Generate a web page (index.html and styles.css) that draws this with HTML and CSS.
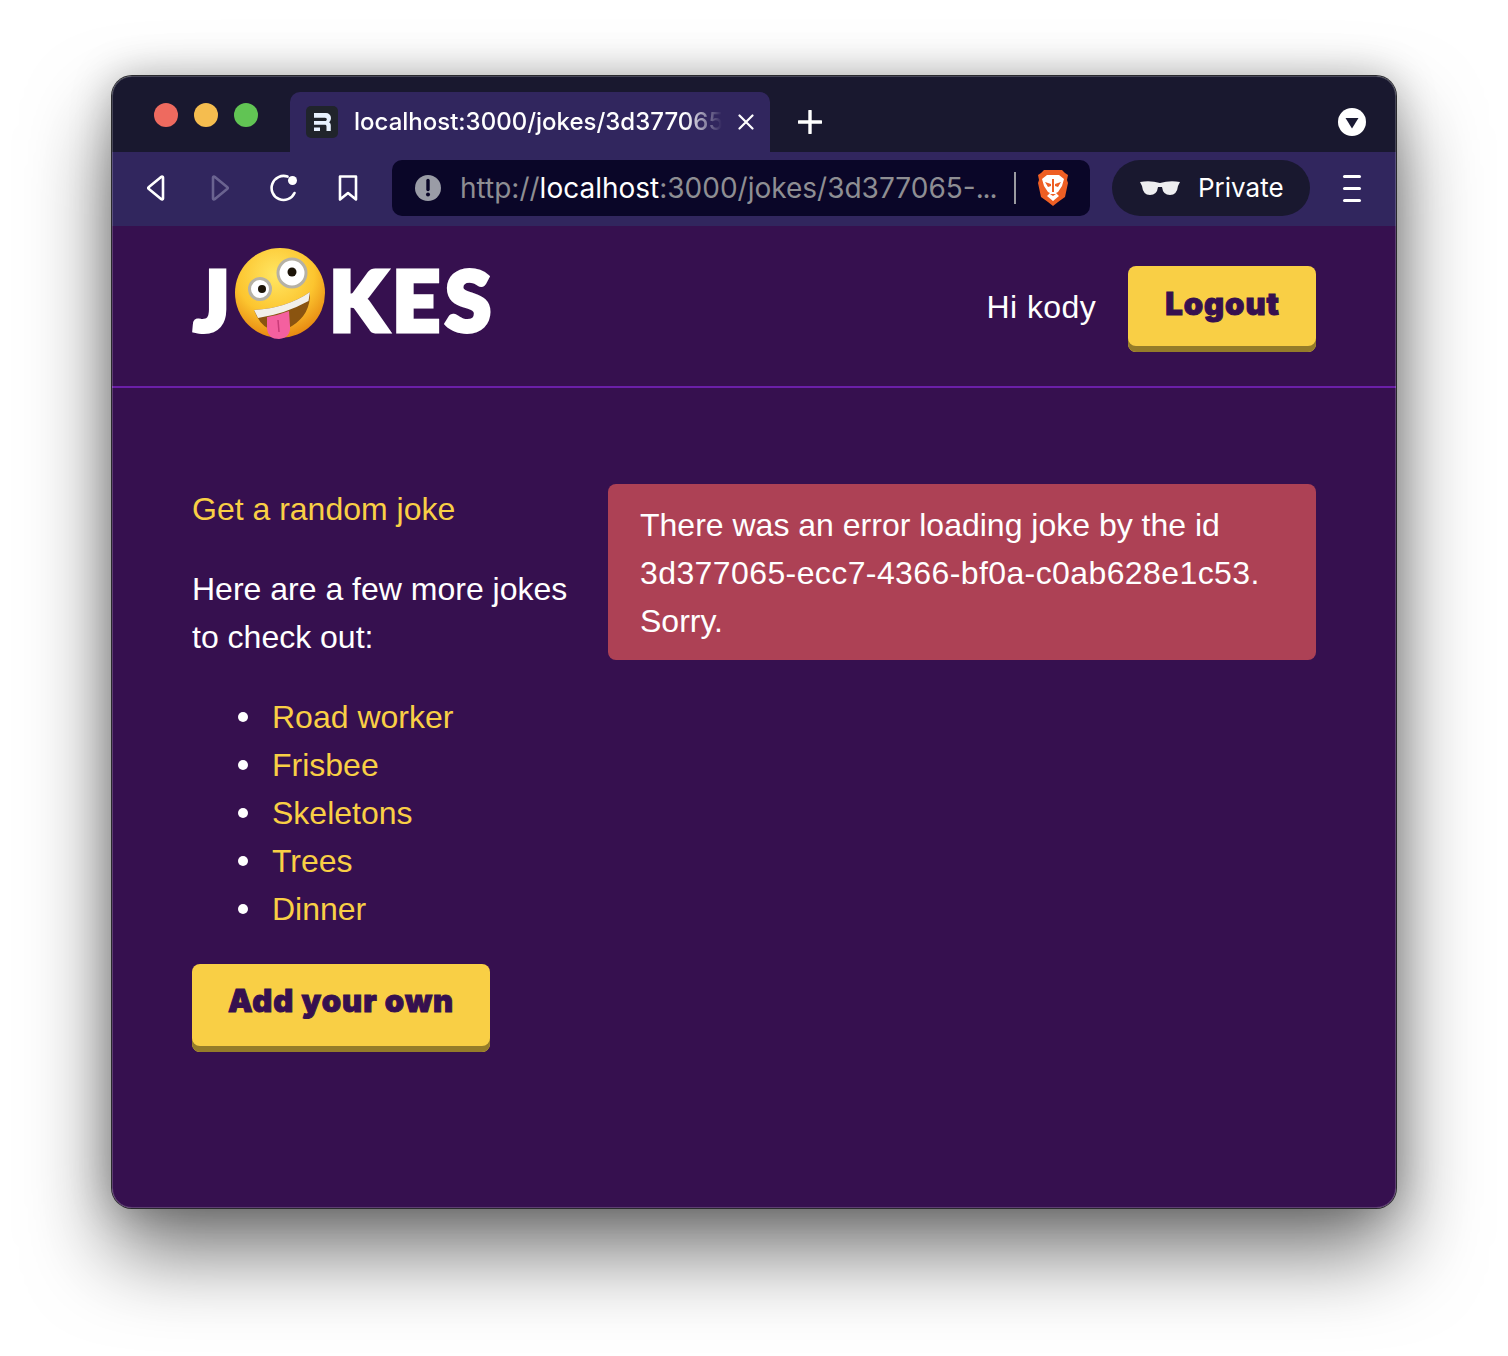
FILE: index.html
```html
<!DOCTYPE html>
<html lang="en">
<head>
    <meta charset="UTF-8">
    <title>Jokes</title>
    <link rel="stylesheet" href="styles.css">
</head>
<body>
    <div class="window">
        <div class="titlebar">
            <div class="lights">
                <span class="light red"></span>
                <span class="light yellow"></span>
                <span class="light green"></span>
            </div>
            <div class="tab">
                <svg class="favicon" viewBox="0 0 32 32">
                    <rect width="32" height="32" rx="5" fill="#20242b"/>
                    <path d="M8 7h12a5 5 0 0 1 5 5c0 2-.8 3.300-2 4.200 1.200.7 1.800 1.800 1.800 3.300V25h-4.300v-4.500c0-1.200-.6-1.800-1.800-1.800H8v-3.700h11c1.200 0 1.800-.6 1.800-1.500s-.6-1.700-1.800-1.700H8z" fill="#e8f2ff"/>
                    <path d="M8 21.500h6V25H8z" fill="#e8f2ff"/>
                </svg>
                <span class="tab-title">localhost:3000/jokes/3d377065</span>
                <svg class="tab-close" viewBox="0 0 16 16">
                    <path d="M1.500 1.500l13 13M14.500 1.500l-13 13" stroke="#fff" stroke-width="2.200" stroke-linecap="round"/>
                </svg>
            </div>
            <svg class="new-tab" viewBox="0 0 24 24">
                <path d="M12 1v22M1 12h22" stroke="#fff" stroke-width="3.400" stroke-linecap="round"/>
            </svg>
            <svg class="tab-menu" viewBox="0 0 28 28">
                <circle cx="14" cy="14" r="14" fill="#fff"/>
                <path d="M7.500 10h13L14 20.500z" fill="#1a1a33"/>
            </svg>
        </div>

        <div class="toolbar">
            <button class="tool">
                <svg viewBox="0 0 24 28"><path d="M19 3.500v21a1 1 0 0 1-1.600.8L4.600 14.800a1 1 0 0 1 0-1.600L17.400 2.700A1 1 0 0 1 19 3.500z" fill="none" stroke="#fff" stroke-width="2.600" stroke-linejoin="round"/></svg>
            </button>
            <button class="tool">
                <svg viewBox="0 0 24 28"><path d="M5 3.500v21a1 1 0 0 0 1.600.8l12.800-10.500a1 1 0 0 0 0-1.600L6.600 2.700A1 1 0 0 0 5 3.500z" fill="none" stroke="#6a6390" stroke-width="2.600" stroke-linejoin="round"/></svg>
            </button>
            <button class="tool">
                <svg class="reload" viewBox="0 0 28 28"><path d="M24.500 19A12 12 0 1 1 17.500 2.600" fill="none" stroke="#fff" stroke-width="2.600" stroke-linecap="round"/><circle cx="22.500" cy="6.500" r="4.500" fill="#fff"/></svg>
            </button>
            <button class="tool">
                <svg viewBox="0 0 24 28"><path d="M4 2.500h16v23l-8-6.500-8 6.500z" fill="none" stroke="#fff" stroke-width="2.600" stroke-linejoin="round"/></svg>
            </button>

            <div class="address">
                <svg class="info" viewBox="0 0 28 28">
                    <circle cx="14" cy="14" r="13" fill="#9a9ca6"/>
                    <path d="M14 6.500v9" stroke="#0a0628" stroke-width="3.400" stroke-linecap="round"/>
                    <circle cx="14" cy="20.500" r="2" fill="#0a0628"/>
                </svg>
                <span class="url">http://<b>localhost</b>:3000/jokes/3d377065-<span class="dots">...</span></span>
                <span class="divider"></span>
                <svg class="brave" viewBox="0 0 32 38">
                    <path d="M7 1h18l3 3 3 2-1 5 1 3-3 14-7 5-5 4-5-4-7-5L1 14l1-3-1-5 3-2z" fill="#ee5f24"/>
                    <path d="M10 6h12l5 4-2 7-4 6-2 1 3 3-6 5-6-5 3-3-2-1-4-6-2-7z" fill="#fff"/>
                    <path d="M8 13l6 2v2l-3 1zM24 13l-6 2v2l3 1zM15 10h2v13h-2zM13 25h6l-3 2z" fill="#ee5f24"/>
                </svg>
            </div>

            <div class="private">
                <svg viewBox="0 0 40 16">
                    <path d="M0 2q10-2 20 1 10-3 20-1l-2 4q-1 9-8 9-7 0-8-8h-4q-1 8-8 8-7 0-8-9z" fill="#eeeef0"/>
                </svg>
                <span>Private</span>
            </div>

            <div class="burger"><i></i><i></i><i></i></div>
        </div>

        <div class="page">
            <header class="jokes-header">
                <a class="logo">
                    <span>J</span>
                    <svg class="emoji" viewBox="0 0 90 92">
                        <defs>
                            <radialGradient id="skin" cx="45%" cy="30%" r="72%">
                                <stop offset="0" stop-color="#ffe663"/>
                                <stop offset="0.6" stop-color="#fcc52f"/>
                                <stop offset="1" stop-color="#e6850f"/>
                            </radialGradient>
                        </defs>
                        <circle cx="45" cy="45" r="45" fill="url(#skin)"/>
                        <circle cx="57" cy="25" r="14" fill="#fff" stroke="#b5b1a6" stroke-width="3"/>
                        <circle cx="57" cy="24" r="4.500" fill="#1c1408"/>
                        <circle cx="25" cy="41" r="10.500" fill="#fff" stroke="#b5b1a6" stroke-width="3"/>
                        <circle cx="27" cy="41" r="4" fill="#1c1408"/>
                        <path d="M19 62Q52 60 75 44q1 22-18 34-12 7-23 3-10-5-15-19z" fill="#8a5410"/>
                        <path d="M19 62Q52 60 75 44l-1.500 9Q50 66 23 70z" fill="#f2f0ea"/>
                        <path d="M32 69q12-2 22-6l1 15q1 12-11 13-11 0-12-10z" fill="#f4609f"/>
                        <path d="M43 72l1 12" stroke="#c93a78" stroke-width="1.500" fill="none"/>
                    </svg>
                    <span class="logo-rest">KES</span>
                </a>
                <div class="user-info">
                    <span class="hello">Hi kody</span>
                    <button class="button">Logout</button>
                </div>
            </header>

            <main class="jokes-main">
                <div class="jokes-list">
                    <a class="link">Get a random joke</a>
                    <p>Here are a few more jokes to check out:</p>
                    <ul>
                        <li><a class="link">Road worker</a></li>
                        <li><a class="link">Frisbee</a></li>
                        <li><a class="link">Skeletons</a></li>
                        <li><a class="link">Trees</a></li>
                        <li><a class="link">Dinner</a></li>
                    </ul>
                    <button class="button add-joke">Add your own</button>
                </div>
                <div class="jokes-outlet">
                    <div class="error-container">There was an error loading joke by the id <span class="joke-id">3d377065-ecc7-4366-bf0a-c0ab628e1c53.</span> Sorry.</div>
                </div>
            </main>
        </div>
    </div>
</body>
</html>
```

FILE: styles.css
```css
html, body {
    margin: 0;
    padding: 0;
    height: 1356px;
    overflow: hidden;
    background-color: #fff;
}
body {
    padding: 76px 112px 0;
    box-sizing: border-box;
}
button {
    border: none;
    background: none;
    padding: 0;
    margin: 0;
}

/* окно браузера */
.window {
    position: relative;
    width: 1284px;
    height: 1132px;
    display: flex;
    flex-direction: column;
    border-radius: 20px;
    overflow: hidden;
    box-shadow: 0 0 0 1px #2a2a2e, 0 44px 84px rgba(0, 0, 0, 0.55), 0 0 40px rgba(0, 0, 0, 0.25);
}
.window::after {
    content: "";
    position: absolute;
    inset: 0;
    border: 1px solid rgba(255, 255, 255, 0.2);
    border-radius: 20px;
    pointer-events: none;
}
.titlebar {
    height: 76px;
    flex: none;
    display: flex;
    align-items: flex-end;
    padding-left: 42px;
    background-color: #19182f;
}
.lights {
    display: flex;
    gap: 16px;
    align-self: flex-start;
    margin-top: 27px;
    margin-right: 32px;
}
.light {
    width: 24px;
    height: 24px;
    border-radius: 50%;
}
.red { background-color: #ee6a5f; }
.yellow { background-color: #f5bd4f; }
.green { background-color: #61c454; }

.tab {
    width: 480px;
    height: 60px;
    box-sizing: border-box;
    display: flex;
    align-items: center;
    padding: 0 16px;
    border-radius: 10px 10px 0 0;
    background-color: #31265e;
}
.favicon {
    width: 32px;
    height: 32px;
    flex: none;
    margin-right: 16px;
}
.tab-title {
    width: 368px;
    flex: none;
    overflow: hidden;
    white-space: nowrap;
    color: #fff;
    font: 500 24px/32px Inter, sans-serif;
    -webkit-mask-image: linear-gradient(to right, #000 90%, transparent 100%);
    mask-image: linear-gradient(to right, #000 90%, transparent 100%);
}
.tab-close {
    width: 16px;
    height: 16px;
    flex: none;
    margin-left: 16px;
}
.new-tab {
    width: 24px;
    height: 24px;
    margin: 0 0 18px 28px;
}
.tab-menu {
    width: 28px;
    height: 28px;
    margin: 0 30px 16px auto;
}

.toolbar {
    height: 74px;
    flex: none;
    box-sizing: border-box;
    display: flex;
    align-items: center;
    padding: 0 0 2px 12px;
    background-color: #31265e;
}
.tool {
    width: 64px;
    height: 56px;
    display: flex;
    align-items: center;
    justify-content: center;
}
.tool svg {
    width: 24px;
    height: 28px;
}
.tool .reload {
    width: 28px;
}
.address {
    width: 698px;
    height: 56px;
    margin-left: 12px;
    box-sizing: border-box;
    display: flex;
    align-items: center;
    padding-left: 22px;
    border-radius: 10px;
    background-color: #0a0628;
}
.info {
    width: 28px;
    height: 28px;
    flex: none;
    margin-right: 18px;
}
.url {
    width: 536px;
    flex: none;
    white-space: nowrap;
    color: #8e8e93;
    font: 28px/40px Inter, sans-serif;
}
.url b {
    font-weight: 400;
    color: #fff;
}
.dots {
    letter-spacing: -1.200px;
}
.divider {
    width: 2px;
    height: 32px;
    margin-left: 18px;
    background-color: #9a9aa0;
}
.brave {
    width: 32px;
    height: 38px;
    margin-left: 21px;
}
.private {
    width: 198px;
    height: 56px;
    margin-left: 22px;
    box-sizing: border-box;
    display: flex;
    align-items: center;
    gap: 18px;
    padding-left: 28px;
    border-radius: 28px;
    background-color: #19182f;
    color: #fff;
    font: 26px/32px Inter, sans-serif;
}
.private svg {
    width: 40px;
    height: 16px;
}
.burger {
    width: 18px;
    margin-left: 33px;
    display: flex;
    flex-direction: column;
    gap: 9px;
}
.burger i {
    display: block;
    height: 3px;
    border-radius: 2px;
    background-color: #fff;
}

/* страница */
.page {
    flex: 1;
    background-color: #36104f;
    color: #fff;
    font: 32px/48px "Liberation Sans", Arial, sans-serif;
}
.jokes-header {
    height: 162px;
    box-sizing: border-box;
    display: flex;
    align-items: center;
    justify-content: space-between;
    padding: 0 80px;
    border-bottom: 2px solid #6b1fa8;
}
.logo {
    display: flex;
    align-items: center;
    margin: 0 0 24px 2px;
    color: #fff;
    font: 900 82px/92px Lato, sans-serif;
    -webkit-text-stroke: 5px #fff;
    letter-spacing: 4px;
}
.logo span {
    padding-top: 10px;
}
.logo .logo-rest {
    letter-spacing: 6px;
}
.emoji {
    width: 90px;
    height: 92px;
    margin: 0 4px 0 2px;
}
.user-info {
    display: flex;
    align-items: center;
    gap: 32px;
    padding-top: 6px;
}
.hello {
    letter-spacing: 0.4px;
    margin-bottom: 4px;
}
.button {
    height: 86px;
    box-sizing: border-box;
    padding: 0 36px 10px 37px;
    border-radius: 8px;
    background-color: #f9cf45;
    box-shadow: inset 0 -6px 0 #957c29;
    color: #36104f;
    font: 900 31px/48px Inter, sans-serif;
    letter-spacing: 1px;
    -webkit-text-stroke: 1px #36104f;
}
.add-joke {
    height: 88px;
    padding: 0 36px 14px;
}
.jokes-main {
    display: grid;
    grid-template-columns: 384px 708px;
    gap: 32px;
    padding: 96px 80px 0;
}
.link {
    color: #f9cf45;
}
.jokes-list {
    padding-top: 1px;
}
.jokes-list p {
    margin: 32px 0;
}
.jokes-list ul {
    list-style: none;
    margin: 32px 0 31px;
    padding-left: 46px;
}
.jokes-list li {
    display: flex;
    align-items: center;
    gap: 24px;
}
.jokes-list li::before {
    content: "";
    width: 10px;
    height: 10px;
    border-radius: 50%;
    background-color: #fff;
}
.error-container {
    padding: 17px 32px 15px;
    border-radius: 8px;
    background-color: #ad4155;
}
.joke-id {
    letter-spacing: 0.4px;
}
```
